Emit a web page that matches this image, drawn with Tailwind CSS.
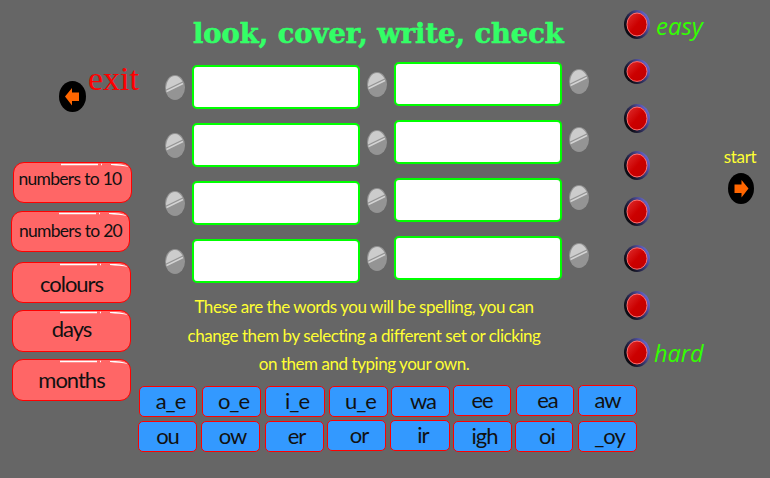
<!DOCTYPE html>
<html lang="en">
<head>
  <meta charset="UTF-8" />
  <meta name="viewport" content="width=device-width, initial-scale=1.0"/>
  <title>look, cover, write, check</title>
  <script src="https://cdn.jsdelivr.net/npm/@tailwindcss/browser@4"></script>
</head>
<body class="bg-[#666666] font-['Lato',sans-serif]">

  <!-- shared icons -->
  <svg class="absolute w-0 h-0">
    <defs>
      <linearGradient id="ringFill" x1="0" y1="0.8" x2="1" y2="0.2">
        <stop offset="0.15" stop-color="#0c0c14"/>
        <stop offset="0.6" stop-color="#3d3d78"/>
        <stop offset="1" stop-color="#7070e0"/>
      </linearGradient>
      <linearGradient id="redFill" x1="0" y1="0" x2="1" y2="1">
        <stop offset="0" stop-color="#e03030"/>
        <stop offset="0.5" stop-color="#cc0000"/>
        <stop offset="1" stop-color="#c00000"/>
      </linearGradient>
      <symbol id="screw" viewBox="0 0 20 25">
        <ellipse cx="10" cy="12.500" rx="10" ry="12.500" fill="#949494"/>
        <path d="M10 1C4.500 1 1 7 1 14.500L17.500 6.500C15.500 3 13 1 10 1Z" fill="#cccccc"/>
        <path d="M1.500 16.500L18 8.500" stroke="#d4d4d4" stroke-width="1.500"/>
      </symbol>
      <symbol id="redButton" viewBox="0 0 26 29" preserveAspectRatio="none">
        <ellipse cx="13" cy="14.500" rx="13" ry="14.500" fill="url(#ringFill)"/>
        <ellipse cx="13" cy="14.500" rx="10" ry="11.500" fill="url(#redFill)" stroke="#ff7070" stroke-width="1"/>
      </symbol>
      <symbol id="arrowLeft" viewBox="0 0 27 31">
        <ellipse cx="13.500" cy="15.500" rx="13.500" ry="15.500" fill="#000"/>
        <path d="M6 15.500L13 7V11.500H20V20H13V24.500Z" fill="#ff6600"/>
      </symbol>
      <symbol id="arrowRight" viewBox="0 0 26 31">
        <ellipse cx="13" cy="15.500" rx="13" ry="15.500" fill="#000"/>
        <path d="M20.500 15.500L13.500 7V11.500H6.500V20H13.500V24.500Z" fill="#ff6600"/>
      </symbol>
      <symbol id="gloss" viewBox="0 0 119 6">
        <path d="M47 1.500H84M87 1.500H88" stroke="#fff" stroke-width="1.500" fill="none"/>
        <path d="M97 1C104 1 111 1.500 115 4C110 3 103 2.500 97 2Z" fill="#fff"/>
      </symbol>
    </defs>
  </svg>

  <div class="w-[770px] h-[478px] overflow-hidden flex">

    <!-- Left column -->
    <aside class="w-[138px] shrink-0 flex flex-col items-start">
      <div class="h-[162px] pl-[59px] flex items-start">
        <button class="mt-[81px] w-[27px] h-[31px] shrink-0"><svg class="w-[27px] h-[31px]"><use href="#arrowLeft"/></svg></button>
        <span class="ml-[2px] mt-[59px] font-['Liberation_Serif',serif] text-[34px] leading-[40px] text-[#ff0000]">exit</span>
      </div>
      <button class="relative ml-[13px] w-[119px] h-[41px] pb-[7px] pr-[5px] rounded-[11px] border-[1.5px] border-[#ff0000] bg-[#ff6666] text-[#111] text-[17.500px] tracking-[-0.7px] leading-none">numbers to 10<svg class="absolute top-0 left-0 w-[119px] h-[6px]"><use href="#gloss"/></svg></button>
      <button class="relative ml-[11px] mt-[8px] w-[119px] h-[41px] pb-[2px] rounded-[11px] border-[1.5px] border-[#ff0000] bg-[#ff6666] text-[#111] text-[17.500px] tracking-[-0.7px] leading-none">numbers to 20<svg class="absolute top-0 left-0 w-[119px] h-[6px]"><use href="#gloss"/></svg></button>
      <button class="relative ml-[12px] mt-[10px] w-[119px] h-[41px] pt-[2px] rounded-[11px] border-[1.5px] border-[#ff0000] bg-[#ff6666] text-[#111] text-[22px] tracking-[-1px] leading-none">colours<svg class="absolute top-0 left-0 w-[119px] h-[6px]"><use href="#gloss"/></svg></button>
      <button class="relative ml-[12px] mt-[7px] w-[119px] h-[42px] pb-[4px] rounded-[11px] border-[1.5px] border-[#ff0000] bg-[#ff6666] text-[#111] text-[22px] tracking-[-1px] leading-none">days<svg class="absolute top-0 left-0 w-[119px] h-[6px]"><use href="#gloss"/></svg></button>
      <button class="relative ml-[12px] mt-[7px] w-[119px] h-[42px] rounded-[11px] border-[1.5px] border-[#ff0000] bg-[#ff6666] text-[#111] text-[22px] tracking-[-1px] leading-none">months<svg class="absolute top-0 left-0 w-[119px] h-[6px]"><use href="#gloss"/></svg></button>
    </aside>

    <!-- Middle column -->
    <main class="w-[486px] shrink-0 flex flex-col">
      <h1 class="ml-[55px] mt-[14px] h-[38px] whitespace-nowrap font-['DejaVu_Serif',serif] font-bold text-[27.300px] leading-[38px] text-[#33ff66] [-webkit-text-stroke:0.6px_#33ff66]">look, cover, write, check</h1>

      <div class="pl-[27px] flex gap-[7px]">
        <div class="mt-[13px] flex flex-col gap-[14px]">
          <div class="flex items-center gap-[7px]">
            <svg class="w-[20px] h-[25px]"><use href="#screw"/></svg>
            <input class="w-[168px] h-[44px] rounded-[5px] border-2 border-[#00ff00] bg-white">
          </div>
          <div class="flex items-center gap-[7px]">
            <svg class="w-[20px] h-[25px]"><use href="#screw"/></svg>
            <input class="w-[168px] h-[44px] rounded-[5px] border-2 border-[#00ff00] bg-white">
          </div>
          <div class="flex items-center gap-[7px]">
            <svg class="w-[20px] h-[25px]"><use href="#screw"/></svg>
            <input class="w-[168px] h-[44px] rounded-[5px] border-2 border-[#00ff00] bg-white">
          </div>
          <div class="flex items-center gap-[7px]">
            <svg class="w-[20px] h-[25px]"><use href="#screw"/></svg>
            <input class="w-[168px] h-[44px] rounded-[5px] border-2 border-[#00ff00] bg-white">
          </div>
        </div>
        <div class="mt-[10px] flex flex-col gap-[14px]">
          <div class="flex items-center gap-[7px]">
            <svg class="w-[20px] h-[25px]"><use href="#screw"/></svg>
            <input class="w-[168px] h-[44px] rounded-[5px] border-2 border-[#00ff00] bg-white">
            <svg class="w-[20px] h-[25px] mb-[6px]"><use href="#screw"/></svg>
          </div>
          <div class="flex items-center gap-[7px]">
            <svg class="w-[20px] h-[25px]"><use href="#screw"/></svg>
            <input class="w-[168px] h-[44px] rounded-[5px] border-2 border-[#00ff00] bg-white">
            <svg class="w-[20px] h-[25px] mb-[6px]"><use href="#screw"/></svg>
          </div>
          <div class="flex items-center gap-[7px]">
            <svg class="w-[20px] h-[25px]"><use href="#screw"/></svg>
            <input class="w-[168px] h-[44px] rounded-[5px] border-2 border-[#00ff00] bg-white">
            <svg class="w-[20px] h-[25px] mb-[6px]"><use href="#screw"/></svg>
          </div>
          <div class="flex items-center gap-[7px]">
            <svg class="w-[20px] h-[25px]"><use href="#screw"/></svg>
            <input class="w-[168px] h-[44px] rounded-[5px] border-2 border-[#00ff00] bg-white">
            <svg class="w-[20px] h-[25px] mb-[6px]"><use href="#screw"/></svg>
          </div>
        </div>
      </div>

      <p class="ml-[26px] mt-[10px] w-[400px] text-center text-[17px] tracking-[-0.45px] leading-[28.500px] text-[#ffff33]">These are the words you will be spelling, you can<br>change them by selecting a different set or clicking<br>on them and typing your own.</p>

      <!-- Sound buttons -->
      <div class="mt-[7px] w-[500px] flex items-start text-[22px] tracking-[-1px] leading-none text-[#111]">
        <button class="ml-[1px] w-[58px] h-[31px] pl-[5px] rounded-[5px] border border-[#ff0000] bg-[#3399ff]">a_e</button>
        <button class="ml-[5px] w-[59px] h-[31px] pl-[4px] rounded-[5px] border border-[#ff0000] bg-[#3399ff]">o_e</button>
        <button class="ml-[4px] w-[60px] h-[31px] pl-[4px] rounded-[5px] border border-[#ff0000] bg-[#3399ff]">i_e</button>
        <button class="ml-[4px] w-[59px] h-[31px] pl-[4px] rounded-[5px] border border-[#ff0000] bg-[#3399ff]">u_e</button>
        <button class="ml-[3px] w-[59px] h-[31px] pl-[5px] rounded-[5px] border border-[#ff0000] bg-[#3399ff]">wa</button>
        <button class="ml-[3px] w-[58px] h-[31px] -mt-px rounded-[5px] border border-[#ff0000] bg-[#3399ff]">ee</button>
        <button class="ml-[5px] w-[58px] h-[31px] -mt-px pl-[5px] rounded-[5px] border border-[#ff0000] bg-[#3399ff]">ea</button>
        <button class="ml-[4px] w-[59px] h-[31px] -mt-px rounded-[5px] border border-[#ff0000] bg-[#3399ff]">aw</button>
      </div>
      <div class="mt-[4px] w-[500px] flex items-start text-[22px] tracking-[-1px] leading-none text-[#111]">
        <button class="w-[59px] h-[31px] rounded-[5px] border border-[#ff0000] bg-[#3399ff]">ou</button>
        <button class="ml-[4px] w-[59px] h-[31px] pl-[4px] rounded-[5px] border border-[#ff0000] bg-[#3399ff]">ow</button>
        <button class="ml-[5px] w-[59px] h-[31px] pl-[4px] rounded-[5px] border border-[#ff0000] bg-[#3399ff]">er</button>
        <button class="ml-[3px] w-[59px] h-[31px] -mt-px pl-[5px] rounded-[5px] border border-[#ff0000] bg-[#3399ff]">or</button>
        <button class="ml-[4px] w-[60px] h-[31px] -mt-px pl-[6px] rounded-[5px] border border-[#ff0000] bg-[#3399ff]">ir</button>
        <button class="ml-[3px] w-[59px] h-[31px] pl-[4px] rounded-[5px] border border-[#ff0000] bg-[#3399ff]">igh</button>
        <button class="ml-[3px] w-[58px] h-[31px] pl-[6px] rounded-[5px] border border-[#ff0000] bg-[#3399ff]">oi</button>
        <button class="ml-[5px] w-[59px] h-[31px] pl-[4px] rounded-[5px] border border-[#ff0000] bg-[#3399ff]">_oy</button>
      </div>
    </main>

    <!-- Difficulty column -->
    <section class="w-[100px] shrink-0 pt-[10px] flex flex-col items-start">
      <div class="flex items-center h-[29px]">
        <svg class="w-[26px] h-[29px] shrink-0"><use href="#redButton"/></svg>
        <span class="ml-[6px] mt-[2px] font-['Open_Sans',sans-serif] italic text-[24px] leading-none text-[#33ff00]">easy</span>
      </div>
      <svg class="w-[26px] h-[25px] mt-[20px] shrink-0"><use href="#redButton"/></svg>
      <svg class="w-[26px] h-[29px] mt-[20px] shrink-0"><use href="#redButton"/></svg>
      <svg class="w-[26px] h-[29px] mt-[18px] shrink-0"><use href="#redButton"/></svg>
      <svg class="w-[26px] h-[29px] mt-[17px] shrink-0"><use href="#redButton"/></svg>
      <svg class="w-[26px] h-[27px] mt-[19px] shrink-0"><use href="#redButton"/></svg>
      <svg class="w-[26px] h-[29px] mt-[19px] shrink-0"><use href="#redButton"/></svg>
      <div class="flex items-center h-[29px] mt-[18px]">
        <svg class="w-[26px] h-[29px] shrink-0"><use href="#redButton"/></svg>
        <span class="ml-[4px] mt-[3px] font-['Open_Sans',sans-serif] italic text-[23.500px] leading-none text-[#33ff00]">hard</span>
      </div>
    </section>

    <!-- Start -->
    <div class="pt-[147px] flex flex-col items-center w-[32px]">
      <span class="text-[17px] leading-[20px] tracking-[-0.3px] text-[#ffff33]">start</span>
      <button class="mt-[6px] ml-[2px] w-[26px] h-[31px]"><svg class="w-[26px] h-[31px]"><use href="#arrowRight"/></svg></button>
    </div>
  </div>

</body>
</html>
